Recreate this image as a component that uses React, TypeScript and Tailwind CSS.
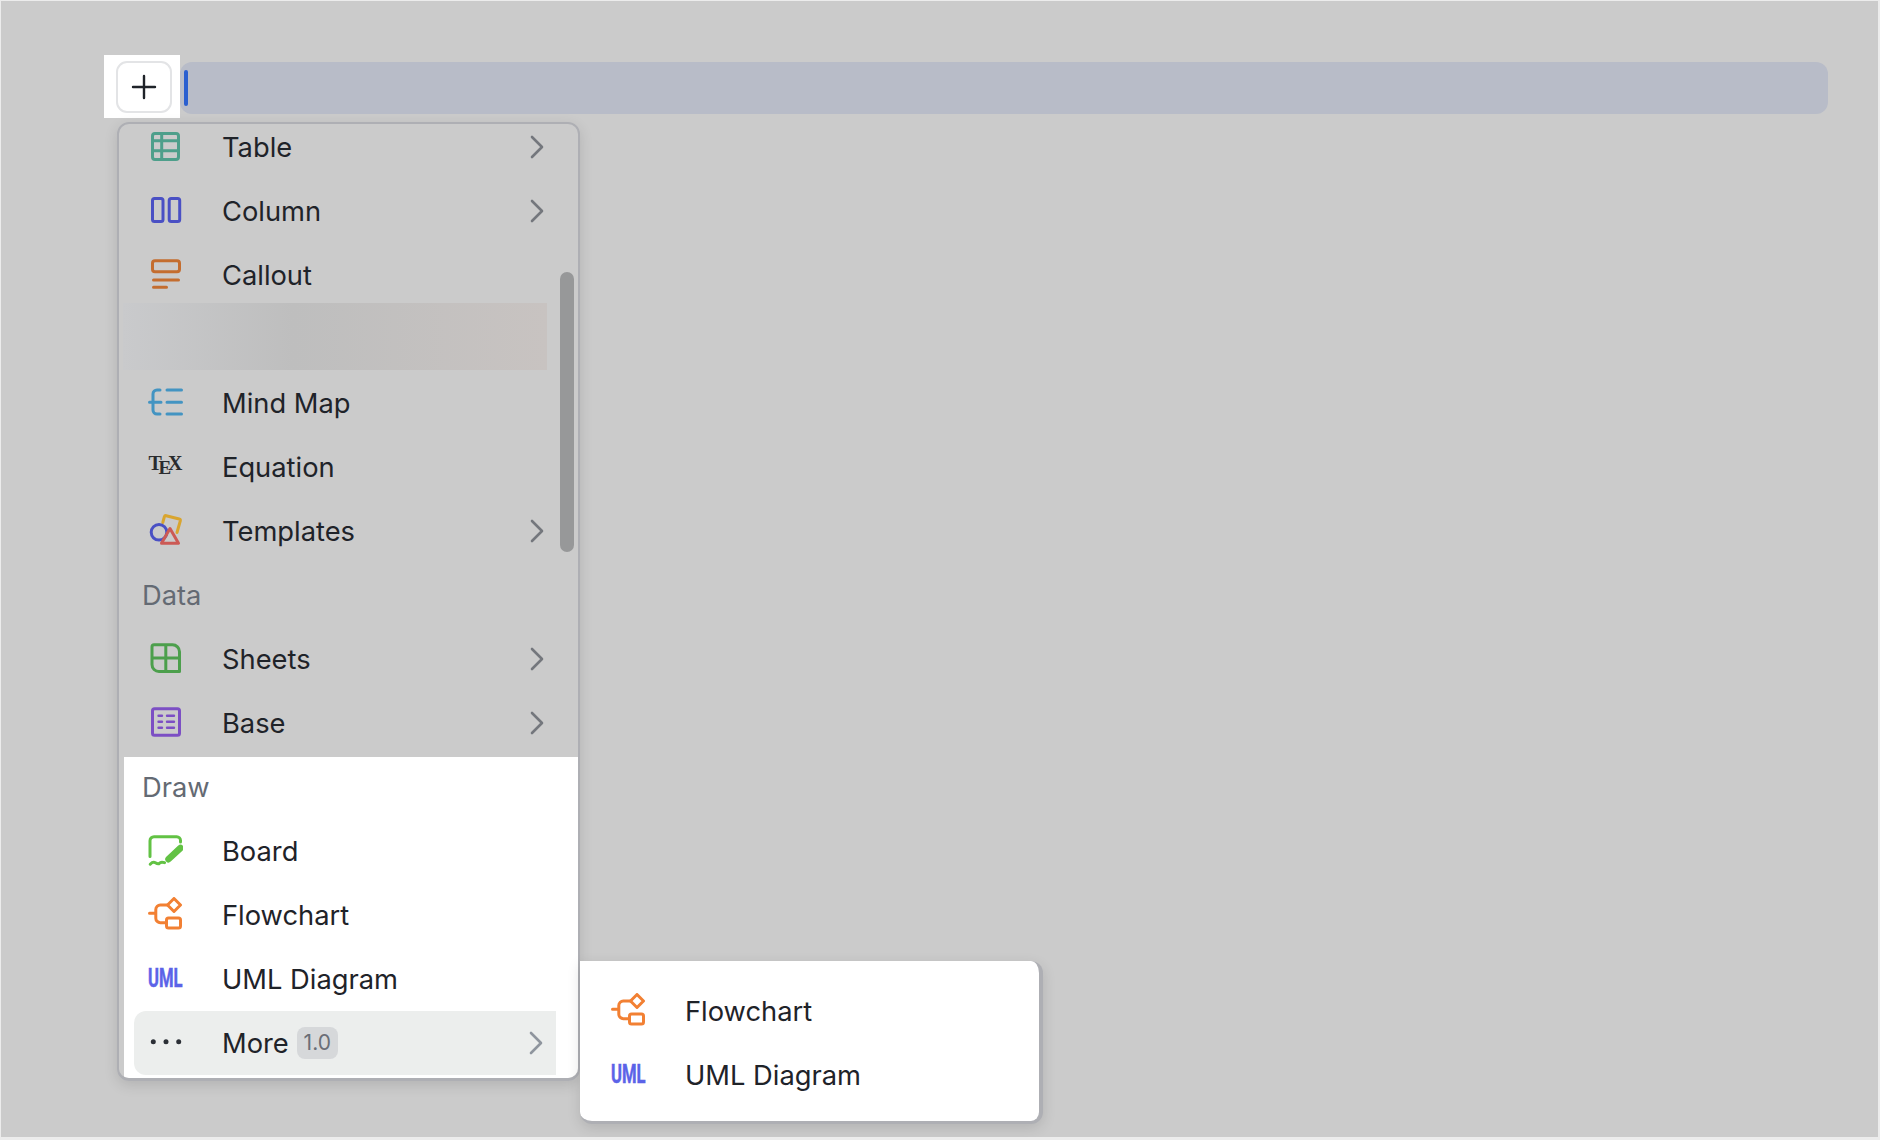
import React from 'react';

const ink = 'text-[#1f2329]';

const Chevron: React.FC<{ dim?: boolean }> = ({ dim }) => (
  <svg width="16" height="24" viewBox="0 0 16 24" fill="none" className={dim ? 'text-[#74777d]' : 'text-[#8f959e]'}>
    <path d="M3 2l10 10L3 22" stroke="currentColor" strokeWidth="2.6" strokeLinecap="round" strokeLinejoin="round" />
  </svg>
);

const Svg: React.FC<{ children: React.ReactNode; className?: string }> = ({ children, className }) => (
  <svg width="36" height="36" viewBox="0 0 36 36" fill="none" strokeWidth="3" strokeLinecap="round" strokeLinejoin="round" stroke="currentColor" className={className}>
    {children}
  </svg>
);

const TableIcon = () => (
  <Svg className="text-[#4e9f8b]">
    <rect x="5.5" y="4.5" width="26" height="26" rx="2.5" />
    <path d="M5 11.7h27M5 21.7h27M14.7 4.5v26" strokeLinecap="butt" />
  </Svg>
);
const ColumnIcon = () => (
  <Svg className="text-[#4a50c4]">
    <rect x="5.5" y="5.5" width="10.5" height="23" rx="2" />
    <rect x="22.2" y="5.5" width="10.5" height="23" rx="2" />
  </Svg>
);
const CalloutIcon = () => (
  <Svg className="text-[#c46d2f]">
    <rect x="5.5" y="3.8" width="27" height="11" rx="2.5" />
    <path d="M6.5 23h25M6.5 30.3h13" />
  </Svg>
);
const MindMapIcon = () => (
  <Svg className="text-[#4394c2]">
    <path d="M13 5h-3a4 4 0 0 0-4 4v16a4 4 0 0 0 4 4h3M2.5 17.3H14M20 5h14.5M20 17.3h14.5M20 29h14.5" />
  </Svg>
);
const TexIcon = () => (
  <svg width="36" height="36" viewBox="0 0 36 36" className="text-[#2a2b2e]">
    <g fill="currentColor" fontFamily="'Liberation Serif', serif" fontSize="20" fontWeight="700">
      <text x="1.5" y="20.5">T</text>
      <text x="11.5" y="25" fontSize="19">E</text>
      <text x="21" y="20.5">X</text>
    </g>
  </svg>
);
const TemplatesIcon = () => (
  <svg width="36" height="36" viewBox="0 0 36 36" fill="none" strokeWidth="3" strokeLinecap="round" strokeLinejoin="round">
    <path d="M15.8 9.5l1.6-5.8a1.5 1.5 0 0 1 1.8-1l13 3.3a1.5 1.5 0 0 1 1.1 1.8L30 19.5" stroke="#d9a52f" />
    <circle cx="12" cy="19.3" r="7.8" stroke="#4a50c4" />
    <path d="M23 15.5l8.5 14.7H14.5z" stroke="#cc5a55" />
  </svg>
);
const SheetsIcon = () => (
  <Svg className="text-[#4c9f4c]">
    <path d="M7 3.8h18.5a7 7 0 0 1 7 7v19.7H12a7 7 0 0 1-7-7V5.8a2 2 0 0 1 2-2z" />
    <path d="M18.8 3.8v26.7M5 17h27.5" strokeLinecap="butt" />
  </Svg>
);
const BaseIcon = () => (
  <Svg className="text-[#7c4fc4]">
    <rect x="5.5" y="3.8" width="27" height="26.5" rx="2" />
    <path d="M11.5 10.7h3.5M20 10.7h7M11.5 16.7h3.5M20 16.7h7M11.5 22.7h3.5M20 22.7h7" strokeWidth="2.4" />
  </Svg>
);
const BoardIcon = () => (
  <Svg className="text-[#62c244]">
    <path d="M33.5 9V7.5a3.8 3.8 0 0 0-3.8-3.8H7a4 4 0 0 0-4 4v15.8" />
    <path d="M21.5 26.2L33.5 15" strokeWidth="6.5" />
    <path d="M3.2 31.2c2-2 3.6-2.4 5.2-1.4s3 1.6 4 .4 2.4-1.4 5.2-.6" />
  </Svg>
);
const FlowchartIcon = () => (
  <Svg className="text-[#f28033]">
    <path d="M21 8h-7.5a4.5 4.5 0 0 0-4.7 4.5v8.7a4.5 4.5 0 0 0 4.7 4.5H19M2.5 16.3h6" />
    <path d="M27 1.5l6.5 6.5-6.5 6.5-6.5-6.5z" />
    <rect x="19.5" y="21" width="14" height="10" rx="2" />
  </Svg>
);
const UmlIcon = () => (
  <svg width="36" height="36" viewBox="0 0 36 36" className="text-[#5b63e8] overflow-visible">
    <text x="1" y="26" fill="currentColor" stroke="currentColor" strokeWidth="0.5" fontFamily="Roboto, sans-serif" fontSize="25" fontWeight="700" textLength="34.5" lengthAdjust="spacingAndGlyphs">
      UML
    </text>
  </svg>
);
const DotsIcon = () => (
  <svg width="36" height="36" viewBox="0 0 36 36" className="text-[#2b2f36]">
    <circle cx="6.3" cy="16.7" r="2.5" fill="currentColor" />
    <circle cx="19" cy="16.7" r="2.5" fill="currentColor" />
    <circle cx="31.7" cy="16.7" r="2.5" fill="currentColor" />
  </svg>
);

type RowProps = { icon: React.ReactNode; label: string; arrow?: boolean; dim?: boolean };

const Row: React.FC<RowProps> = ({ icon, label, arrow, dim }) => (
  <div className={`h-16 flex items-center pl-[28px] pr-[33px] text-[27.3px] ${ink}`}>
    <span className="w-[75px] shrink-0 flex">{icon}</span>
    <span className="flex-1 pt-[2px]">{label}</span>
    {arrow && <Chevron dim={dim} />}
  </div>
);

const GroupLabel: React.FC<{ children: React.ReactNode }> = ({ children }) => (
  <div className="h-16 flex items-center pl-[23px] pt-[2px] text-[27.3px] text-[#646a73]">{children}</div>
);

export default function App() {
  return (
    <div className="h-screen w-full overflow-hidden bg-[#cbcbcb] border-t border-l border-r-2 border-b-[3px] border-[#ececec] pl-[103px] pr-[50px] pt-[54px] font-['Inter','Noto_Sans',sans-serif]">
      {/* toolbar row */}
      <div className="flex items-center">
        <div className="w-[76px] h-[63px] bg-white flex items-center pl-[12px] shrink-0">
          <div className="w-[56px] h-[52px] rounded-[11px] border-2 border-[#e3e4e6] flex items-center justify-center">
            <svg width="26" height="26" viewBox="0 0 26 26" fill="none" stroke="#1f2329" strokeWidth="2.4" strokeLinecap="round">
              <path d="M13 2v22M2 13h22" />
            </svg>
          </div>
        </div>
        <div className="flex-1 h-[52px] mt-[3px] rounded-[12px] bg-[#b8bcc8] flex items-center pl-[4px]">
          <div className="w-[4px] h-[36px] rounded-[2px] bg-[#2a5fd0]" />
        </div>
      </div>

      {/* block menu */}
      <div className="relative ml-[13px] mt-[4px] w-[463px] h-[959px] rounded-[12px] border-2 border-b-[3px] border-[#aeafb4] shadow-[0_4px_14px_rgba(0,0,0,0.12)]">
        <div className="h-full overflow-hidden rounded-[10px] flex flex-col">
          <div className="h-[642px] -mt-[9px] shrink-0">
            <Row icon={<TableIcon />} label="Table" arrow dim />
            <Row icon={<ColumnIcon />} label="Column" arrow dim />
            <Row icon={<CalloutIcon />} label="Callout" dim />
            <div className="h-[67px] w-[424px] -mt-[4px] mb-[1px] ml-[4px] bg-gradient-to-r from-[#c9cacc] via-[#bebebe] via-40% to-[#c8c3c1]" />
            <Row icon={<MindMapIcon />} label="Mind Map" dim />
            <Row icon={<TexIcon />} label="Equation" dim />
            <Row icon={<TemplatesIcon />} label="Templates" arrow dim />
            <GroupLabel>Data</GroupLabel>
            <Row icon={<SheetsIcon />} label="Sheets" arrow dim />
            <Row icon={<BaseIcon />} label="Base" arrow dim />
          </div>
          <div className="flex-1 bg-white ml-[5px]">
            <div className="-ml-[5px] -mt-[2px]">
              <GroupLabel>Draw</GroupLabel>
              <Row icon={<BoardIcon />} label="Board" />
              <Row icon={<FlowchartIcon />} label="Flowchart" />
              <Row icon={<UmlIcon />} label="UML Diagram" />
              <div className={`h-16 ml-[15px] mr-[22px] rounded-l-[12px] bg-[#eceeed] flex items-center pl-[13px] pr-[12px] text-[27.3px] ${ink}`}>
                <span className="w-[75px] shrink-0 flex">
                  <DotsIcon />
                </span>
                <span className="pt-[2px]">More</span>
                <span className="ml-[8px] w-[41px] h-[32px] rounded-[8px] bg-[#d6d8da] text-[#6a6e76] text-[21px] flex items-center justify-center">1.0</span>
                <span className="flex-1" />
                <Chevron />
              </div>
            </div>
          </div>
        </div>

        {/* scrollbar */}
        <div className="absolute left-[441px] top-[148px] w-[14px] h-[280px] rounded-[7px] bg-[#979899]" />

        {/* submenu */}
        <div className="absolute left-[461px] top-[837px] w-[463px] h-[163px] rounded-r-[12px] rounded-bl-[12px] bg-white border-r-[4px] border-b-[3px] border-[#aeafb4] shadow-[0_4px_14px_rgba(0,0,0,0.12)] pt-[18px] pl-[2px]">
          <Row icon={<FlowchartIcon />} label="Flowchart" />
          <Row icon={<UmlIcon />} label="UML Diagram" />
        </div>
      </div>
    </div>
  );
}
